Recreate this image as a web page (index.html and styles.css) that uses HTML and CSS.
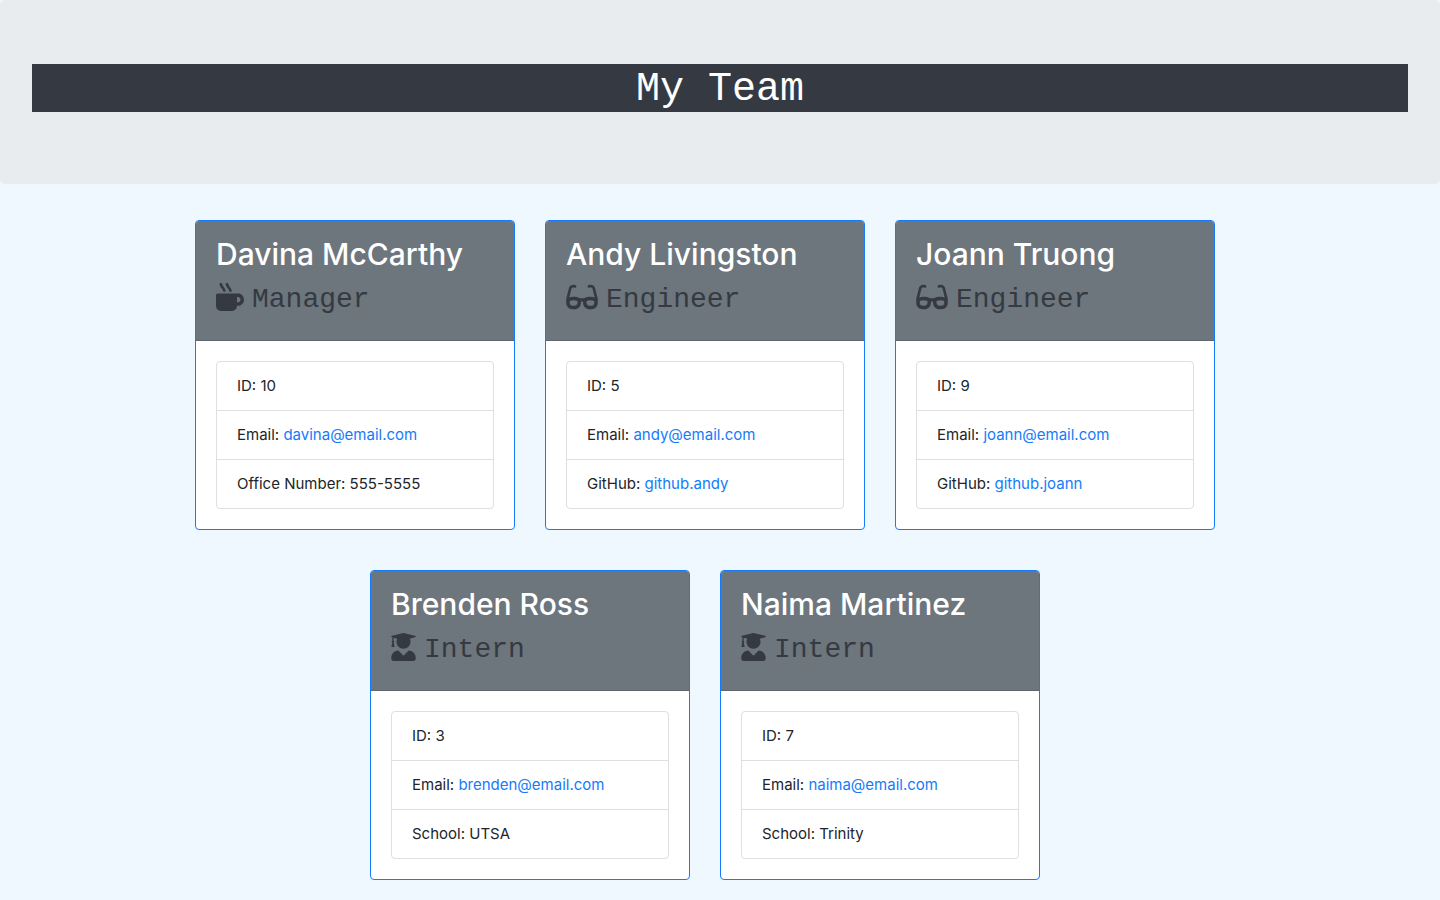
FILE: index.html
```html
<!DOCTYPE html>
<html lang="en">
<head>
  <meta charset="utf-8">
  <meta name="viewport" content="width=device-width, initial-scale=1">
  <title>My Team</title>
  <link rel="stylesheet" href="styles.css">
</head>
<body>
  <svg class="sprite" aria-hidden="true">
    <symbol id="mug" viewBox="0 0 512 512"><path d="M127.1 146.5c1.3 7.7 8 13.5 16 13.5h16.5c9.8 0 17.6-8.5 16.3-18-3.8-28.2-16.4-54.2-36.6-74.7-14.4-14.7-23.6-33.3-26.4-53.5C111.8 5.9 105 0 96.8 0H80.4C70.6 0 63 8.5 64.1 18c3.9 31.9 18 61.3 40.6 84.4 12 12.2 19.7 27.5 22.4 44.1zm112 0c1.3 7.7 8 13.5 16 13.5h16.5c9.8 0 17.6-8.5 16.3-18-3.8-28.2-16.4-54.2-36.6-74.7-14.4-14.7-23.6-33.3-26.4-53.5C223.8 5.9 217 0 208.8 0h-16.4c-9.8 0-17.5 8.5-16.3 18 3.9 31.9 18 61.3 40.6 84.4 12 12.2 19.7 27.5 22.4 44.1zM400 192H32c-17.700 0-32 14.300-32 32v192c0 53 43 96 96 96h192c53 0 96-43 96-96h16c61.800 0 112-50.200 112-112s-50.200-112-112-112zm0 160h-16v-96h16c26.500 0 48 21.500 48 48s-21.500 48-48 48z"/></symbol>
    <symbol id="glasses" viewBox="0 0 576 512"><path d="M574.1 280.37L528.75 98.66c-5.91-23.7-21.59-44.05-43-55.81-21.44-11.73-46.97-14.11-70.19-6.33l-15.25 5.08c-8.39 2.79-12.92 11.86-10.12 20.24l5.06 15.18c2.79 8.38 11.85 12.91 20.23 10.12l13.18-4.39c10.87-3.62 23-3.57 33.16 1.73 10.29 5.37 17.57 14.56 20.37 25.82l38.46 153.82c-22.19-6.81-49.79-12.46-81.2-12.46-34.77 0-73.98 7.02-114.85 26.74h-73.18c-40.87-19.74-80.08-26.75-114.86-26.75-31.42 0-59.02 5.65-81.21 12.46l38.46-153.83c2.79-11.25 10.09-20.45 20.38-25.81 10.16-5.3 22.28-5.35 33.15-1.73l13.17 4.39c8.38 2.79 17.44-1.74 20.23-10.12l5.06-15.18c2.8-8.38-1.73-17.45-10.12-20.24l-15.25-5.08c-23.22-7.78-48.75-5.41-70.19 6.33-21.41 11.77-37.09 32.11-43 55.8L1.9 280.37A64.218 64.218 0 0 0 0 295.86v70.25C0 429.01 51.58 480 115.2 480h37.12c60.28 0 110.37-45.94 114.88-105.37l2.93-38.63h35.75l2.93 38.63C313.31 434.06 363.4 480 423.68 480h37.12c63.62 0 115.2-50.99 115.2-113.88v-70.25c0-5.23-.64-10.43-1.9-15.5zm-370.72 89.42c-1.97 25.91-24.4 46.21-51.06 46.21H115.2C86.97 416 64 393.62 64 366.11v-37.54c18.12-6.49 43.42-12.92 72.58-12.92 23.86 0 47.26 4.33 69.93 12.92l-3.13 41.22zM512 366.12c0 27.51-22.97 49.88-51.2 49.88h-37.12c-26.67 0-49.1-20.3-51.06-46.21l-3.13-41.22c22.67-8.59 46.08-12.92 69.95-12.92 29.12 0 54.43 6.44 72.55 12.93v37.54z"/></symbol>
    <symbol id="graduate" viewBox="0 0 448 512"><path d="M319.4 320.6L224 416l-95.4-95.4C57.1 323.7 0 382.2 0 454.4v9.6c0 26.5 21.5 48 48 48h352c26.5 0 48-21.5 48-48v-9.6c0-72.2-57.1-130.7-128.6-133.8zM13.6 79.8l6.4 1.5v58.4c-7 4.2-12 11.5-12 20.3 0 8.4 4.6 15.4 11.1 19.7L3.5 242c-1.7 6.9 2.1 14 7.6 14h41.8c5.5 0 9.3-7.1 7.6-14l-15.6-62.3C51.4 175.4 56 168.4 56 160c0-8.8-5-16.1-12-20.3V87.1l66 15.9c-8.6 17.2-14 36.4-14 57 0 70.7 57.3 128 128 128s128-57.3 128-128c0-20.6-5.3-39.8-14-57l96.3-23.2c18.2-4.4 18.2-27.1 0-31.5l-190.4-46c-13-3.1-26.7-3.1-39.7 0L13.6 48.2c-18.1 4.4-18.1 27.2 0 31.6z"/></symbol>
  </svg>

  <header class="banner">
    <h1 class="banner-title">My Team</h1>
  </header>

  <main class="team">
    <article class="card">
      <div class="card-header">
        <h2 class="name">Davina McCarthy</h2>
        <h3 class="role"><svg class="icon icon-mug" aria-hidden="true"><use href="#mug"/></svg>Manager</h3>
      </div>
      <ul class="details">
        <li>ID: 10</li>
        <li>Email: <a href="mailto:davina@email.com">davina@email.com</a></li>
        <li>Office Number: 555-5555</li>
      </ul>
    </article>

    <article class="card">
      <div class="card-header">
        <h2 class="name">Andy Livingston</h2>
        <h3 class="role"><svg class="icon icon-glasses" aria-hidden="true"><use href="#glasses"/></svg>Engineer</h3>
      </div>
      <ul class="details">
        <li>ID: 5</li>
        <li>Email: <a href="mailto:andy@email.com">andy@email.com</a></li>
        <li>GitHub: <a href="https://github.com/github.andy">github.andy</a></li>
      </ul>
    </article>

    <article class="card">
      <div class="card-header">
        <h2 class="name">Joann Truong</h2>
        <h3 class="role"><svg class="icon icon-glasses" aria-hidden="true"><use href="#glasses"/></svg>Engineer</h3>
      </div>
      <ul class="details">
        <li>ID: 9</li>
        <li>Email: <a href="mailto:joann@email.com">joann@email.com</a></li>
        <li>GitHub: <a href="https://github.com/github.joann">github.joann</a></li>
      </ul>
    </article>

    <article class="card">
      <div class="card-header">
        <h2 class="name">Brenden Ross</h2>
        <h3 class="role"><svg class="icon icon-graduate" aria-hidden="true"><use href="#graduate"/></svg>Intern</h3>
      </div>
      <ul class="details">
        <li>ID: 3</li>
        <li>Email: <a href="mailto:brenden@email.com">brenden@email.com</a></li>
        <li>School: UTSA</li>
      </ul>
    </article>

    <article class="card">
      <div class="card-header">
        <h2 class="name">Naima Martinez</h2>
        <h3 class="role"><svg class="icon icon-graduate" aria-hidden="true"><use href="#graduate"/></svg>Intern</h3>
      </div>
      <ul class="details">
        <li>ID: 7</li>
        <li>Email: <a href="mailto:naima@email.com">naima@email.com</a></li>
        <li>School: Trinity</li>
      </ul>
    </article>
  </main>
</body>
</html>
```

FILE: styles.css
```css
* {
  box-sizing: border-box;
}

body {
  margin: 0;
  background: #f0f8ff;
  color: #212529;
  font-family: Inter, Roboto, sans-serif;
  font-size: 15px;
  line-height: 24px;
}

h1,
h2,
h3,
ul {
  margin: 0;
  padding: 0;
}

a {
  color: #147bfa;
  text-decoration: none;
}

a:hover {
  text-decoration: underline;
}

.sprite {
  display: none;
}

.banner {
  padding: 64px 32px 72px;
  border-radius: 5px;
  background: #e8ecef;
}

.banner-title {
  padding-top: 4px;
  background: #353a42;
  color: #fff;
  font-family: "Courier New", "Liberation Mono", monospace;
  font-size: 40px;
  font-weight: 400;
  line-height: 44px;
  text-align: center;
}

.team {
  display: flex;
  flex-wrap: wrap;
  justify-content: center;
  gap: 40px 0;
  max-width: 1140px;
  margin: 36px auto 20px;
}

.card {
  width: 320px;
  margin-right: 30px;
  border: 1px solid #147bfa;
  border-radius: 4px;
  background: #fff;
}

.card-header {
  padding: 14px 20px 20px;
  border-bottom: 1px solid #5f666e;
  border-radius: 3px 3px 0 0;
  background: #6d757d;
}

.name {
  margin-bottom: 7px;
  color: #fff;
  font-size: 30px;
  font-weight: 500;
  line-height: 38px;
}

.role {
  color: #353a42;
  font-family: "Courier New", "Liberation Mono", monospace;
  font-size: 28px;
  font-weight: 400;
  line-height: 40px;
}

.icon {
  height: 28px;
  margin-right: 8px;
  fill: currentColor;
  vertical-align: -4px;
}

.icon-mug {
  width: 28px;
}

.icon-glasses {
  width: 32px;
}

.icon-graduate {
  width: 25px;
}

.details {
  margin: 20px;
  border: 1px solid #dfdfdf;
  border-radius: 4px;
  list-style: none;
}

.details li {
  padding: 12px 20px;
}

.details li + li {
  border-top: 1px solid #dfdfdf;
}
```
